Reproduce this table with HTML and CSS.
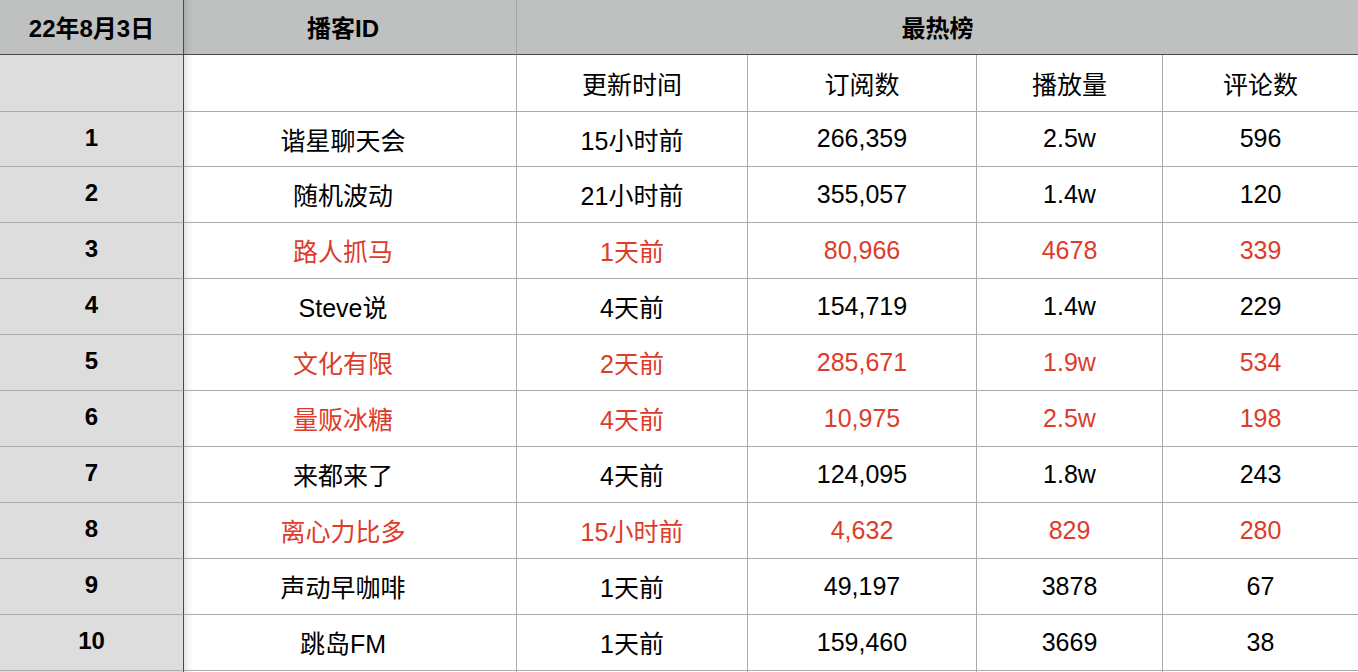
FILE: index.html
```html
<!DOCTYPE html>
<html lang="zh-CN">
<head>
<meta charset="utf-8">
<link rel="stylesheet" href="styles.css">
</head>
<body>
<div class="sheet">
  <div class="row head">
    <div class="c idx">22年8月3日</div>
    <div class="c name">播客ID</div>
    <div class="c span">最热榜</div>
  </div>
  <div class="row sub">
    <div class="c idx"></div>
    <div class="c name"></div>
    <div class="c">更新时间</div>
    <div class="c">订阅数</div>
    <div class="c">播放量</div>
    <div class="c last">评论数</div>
  </div>
  <div class="row body first"><div class="c idx">1</div><div class="c name">谐星聊天会</div><div class="c">15小时前</div><div class="c">266,359</div><div class="c">2.5w</div><div class="c last">596</div></div>
  <div class="row body"><div class="c idx">2</div><div class="c name">随机波动</div><div class="c">21小时前</div><div class="c">355,057</div><div class="c">1.4w</div><div class="c last">120</div></div>
  <div class="row body red"><div class="c idx">3</div><div class="c name">路人抓马</div><div class="c">1天前</div><div class="c">80,966</div><div class="c">4678</div><div class="c last">339</div></div>
  <div class="row body"><div class="c idx">4</div><div class="c name">Steve说</div><div class="c">4天前</div><div class="c">154,719</div><div class="c">1.4w</div><div class="c last">229</div></div>
  <div class="row body red"><div class="c idx">5</div><div class="c name">文化有限</div><div class="c">2天前</div><div class="c">285,671</div><div class="c">1.9w</div><div class="c last">534</div></div>
  <div class="row body red"><div class="c idx">6</div><div class="c name">量贩冰糖</div><div class="c">4天前</div><div class="c">10,975</div><div class="c">2.5w</div><div class="c last">198</div></div>
  <div class="row body"><div class="c idx">7</div><div class="c name">来都来了</div><div class="c">4天前</div><div class="c">124,095</div><div class="c">1.8w</div><div class="c last">243</div></div>
  <div class="row body red"><div class="c idx">8</div><div class="c name">离心力比多</div><div class="c">15小时前</div><div class="c">4,632</div><div class="c">829</div><div class="c last">280</div></div>
  <div class="row body"><div class="c idx">9</div><div class="c name">声动早咖啡</div><div class="c">1天前</div><div class="c">49,197</div><div class="c">3878</div><div class="c last">67</div></div>
  <div class="row body"><div class="c idx">10</div><div class="c name">跳岛FM</div><div class="c">1天前</div><div class="c">159,460</div><div class="c">3669</div><div class="c last">38</div></div>
  <div class="row body"><div class="c idx"></div><div class="c name"></div><div class="c"></div><div class="c"></div><div class="c"></div><div class="c last"></div></div>
</div>
</body>
</html>
```

FILE: styles.css
```css
html, body {
  margin: 0;
  padding: 0;
  background: #ffffff;
}
body {
  font-family: "Liberation Sans", "Noto Sans CJK SC", sans-serif;
  color: #000;
}
.sheet {
  width: 1358px;
  height: 672px;
  overflow: hidden;
}
.row {
  display: grid;
  grid-template-columns: 184px 333px 231px 229px 186px 195px;
}
.c {
  display: flex;
  align-items: center;
  justify-content: center;
  border-right: 1px solid #ababab;
  border-bottom: 1px solid #ababab;
  box-sizing: border-box;
  font-size: 25px;
  white-space: nowrap;
}
.c.last {
  border-right: none;
}
.c.idx {
  background: #dddddd;
  border-right: 1px solid #4a4a4a;
  font-weight: bold;
  font-size: 24px;
}
.c.name {
  padding-right: 14px;
  background-image: linear-gradient(to right, rgba(0,0,0,0.10), rgba(0,0,0,0.03) 5px, rgba(0,0,0,0) 10px);
}
.head .c {
  height: 55px;
  background-color: #bfc1c0;
  border-bottom: 1px solid #4a4a4a;
  font-weight: bold;
  font-size: 24px;
  padding-bottom: 1px;
}
.head .c.idx {
  background-color: #bfc1c0;
}
.head .c.name {
  border-right: 1px solid #a3a5a4;
}
.head .c.span {
  grid-column: 3 / 7;
  border-right: none;
}
.sub .c {
  height: 57px;
  padding-bottom: 1px;
}
.body .c {
  height: 56px;
  padding-bottom: 1px;
}
.body.first .c {
  height: 55px;
}
.body .c.idx {
  padding-bottom: 3px;
}
.red .c:not(.idx) {
  color: #dd3c2b;
}
```
